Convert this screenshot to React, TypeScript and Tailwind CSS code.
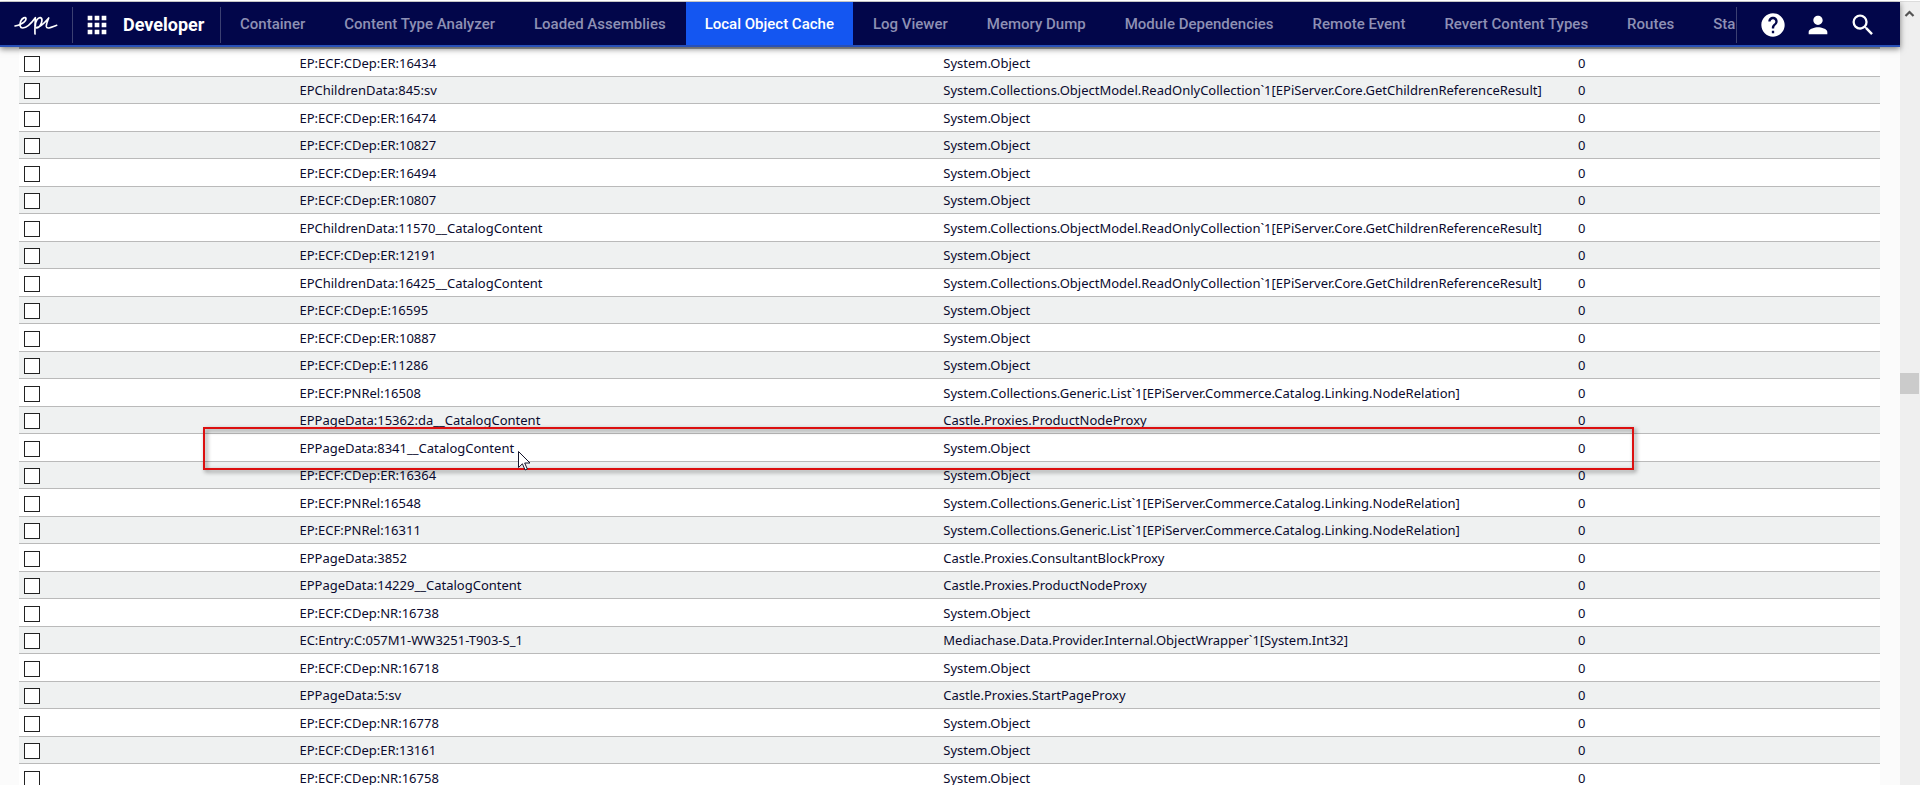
import React from "react";
import clsx from "clsx";
import { MdApps, MdHelp, MdPerson, MdSearch } from "react-icons/md";

type CacheItem = {
  name: string;
  type: string;
  highlighted?: boolean;
};

const childrenResult =
  "System.Collections.ObjectModel.ReadOnlyCollection`1[EPiServer.Core.GetChildrenReferenceResult]";
const nodeRelationList =
  "System.Collections.Generic.List`1[EPiServer.Commerce.Catalog.Linking.NodeRelation]";

const navItems = [
  "Container",
  "Content Type Analyzer",
  "Loaded Assemblies",
  "Local Object Cache",
  "Log Viewer",
  "Memory Dump",
  "Module Dependencies",
  "Remote Event",
  "Revert Content Types",
  "Routes",
  "Sta",
];

const items: CacheItem[] = [
  { name: "EP:ECF:CDep:ER:16434", type: "System.Object" },
  { name: "EPChildrenData:845:sv", type: childrenResult },
  { name: "EP:ECF:CDep:ER:16474", type: "System.Object" },
  { name: "EP:ECF:CDep:ER:10827", type: "System.Object" },
  { name: "EP:ECF:CDep:ER:16494", type: "System.Object" },
  { name: "EP:ECF:CDep:ER:10807", type: "System.Object" },
  { name: "EPChildrenData:11570__CatalogContent", type: childrenResult },
  { name: "EP:ECF:CDep:ER:12191", type: "System.Object" },
  { name: "EPChildrenData:16425__CatalogContent", type: childrenResult },
  { name: "EP:ECF:CDep:E:16595", type: "System.Object" },
  { name: "EP:ECF:CDep:ER:10887", type: "System.Object" },
  { name: "EP:ECF:CDep:E:11286", type: "System.Object" },
  { name: "EP:ECF:PNRel:16508", type: nodeRelationList },
  { name: "EPPageData:15362:da__CatalogContent", type: "Castle.Proxies.ProductNodeProxy" },
  { name: "EPPageData:8341__CatalogContent", type: "System.Object", highlighted: true },
  { name: "EP:ECF:CDep:ER:16364", type: "System.Object" },
  { name: "EP:ECF:PNRel:16548", type: nodeRelationList },
  { name: "EP:ECF:PNRel:16311", type: nodeRelationList },
  { name: "EPPageData:3852", type: "Castle.Proxies.ConsultantBlockProxy" },
  { name: "EPPageData:14229__CatalogContent", type: "Castle.Proxies.ProductNodeProxy" },
  { name: "EP:ECF:CDep:NR:16738", type: "System.Object" },
  {
    name: "EC:Entry:C:057M1-WW3251-T903-S_1",
    type: "Mediachase.Data.Provider.Internal.ObjectWrapper`1[System.Int32]",
  },
  { name: "EP:ECF:CDep:NR:16718", type: "System.Object" },
  { name: "EPPageData:5:sv", type: "Castle.Proxies.StartPageProxy" },
  { name: "EP:ECF:CDep:NR:16778", type: "System.Object" },
  { name: "EP:ECF:CDep:ER:13161", type: "System.Object" },
  { name: "EP:ECF:CDep:NR:16758", type: "System.Object" },
];

const Logo = () => (
  <svg viewBox="44 48 132 60" className="w-11 h-5" fill="none" stroke="white" strokeWidth="5" strokeLinecap="round" strokeLinejoin="round">
    <path d="M47 81C58 80 80 69 80 59C79 52 68 57 64 67C60 78 62 87 70 87C82 86 98 70 108 56C108 70 106 90 107 105" />
    <path d="M108 80C108 66 116 55 123 56C131 58 128 72 122 80C118 86 113 88 110 86C124 86 137 70 148 57C145 66 140 76 141 83C143 92 158 84 172 79" />
  </svg>
);

const Cursor = () => (
  <svg viewBox="0 0 13 20" className="absolute left-[499px] top-[17px] z-10 w-[13px] h-5">
    <path d="M.5 .5V16.5L4.4 12.8L7.1 19L9.3 18L6.7 12H12Z" fill="white" stroke="#15152a" strokeWidth="1" />
  </svg>
);

const Header = () => {
  return (
    <header className="relative z-20 flex h-[45px] shrink-0 items-stretch border-b-2 border-[#2850b8] bg-[#02064a] font-[Roboto,sans-serif] text-white shadow-[0_2px_6px_rgba(0,0,0,0.5)]">
      <a href="#" aria-label="Episerver" className="mt-[5px] mb-0.5 flex w-[73px] shrink-0 items-center border-r border-[#3c4072] pl-[14px]">
        <Logo />
      </a>
      <a href="#" className="mt-[5px] mb-0.5 flex w-[148px] shrink-0 items-center gap-3 border-r border-[#3c4072] pl-[10px] text-lg font-bold">
        <MdApps className="size-7" />
        Developer
      </a>
      <nav className="flex min-w-0 flex-1 gap-px overflow-hidden">
        {navItems.map((label) => (
          <a
            key={label}
            href="#"
            className={clsx(
              "flex shrink-0 items-center px-[19px] pt-0.5 text-[15px] font-medium whitespace-nowrap",
              label === "Local Object Cache" ? "bg-[#1456f1] text-white" : "text-[#8e90b4]"
            )}
          >
            {label}
          </a>
        ))}
      </nav>
      <div className="mt-[5px] mb-0.5 flex w-[164px] shrink-0 items-center gap-[17px] border-l border-[#3c4072] pl-[22px]">
        <button aria-label="Help">
          <MdHelp className="size-7" />
        </button>
        <button aria-label="User">
          <MdPerson className="size-7" />
        </button>
        <button aria-label="Search">
          <MdSearch className="size-7" />
        </button>
      </div>
    </header>
  );
};

const CacheTable = () => {
  return (
    <table className="w-full table-fixed border-separate border-spacing-0 bg-white text-[13px] leading-5 text-[#0a0a2e]">
      <colgroup>
        <col className="w-[14.8%]" />
        <col className="w-[34.6%]" />
        <col className="w-[34.1%]" />
        <col />
      </colgroup>
      <tbody>
        {items.map((item) => (
          <tr
            key={item.name}
            className="relative h-7 even:h-[27px] even:bg-[#eff1f1] *:border-b *:border-[#bababa] *:pt-1 *:pl-[5px] *:align-top even:*:pt-[3px]"
          >
            <td>
              <input
                type="checkbox"
                aria-label={item.name}
                className="mt-[3px] block size-4 appearance-none border border-[#222] bg-white checked:bg-[#1456f1]"
              />
              {item.highlighted && (
                <>
                  <span className="pointer-events-none absolute -top-[7px] right-[13.2%] -bottom-2 left-[9.9%] z-10 border-2 border-[#dc1010] drop-shadow-[2px_2px_2px_rgba(0,0,0,0.5)]"></span>
                  <Cursor />
                </>
              )}
            </td>
            <td>{item.name}</td>
            <td>{item.type}</td>
            <td>0</td>
          </tr>
        ))}
      </tbody>
    </table>
  );
};

const ScrollBar = () => {
  return (
    <div className="flex w-5 shrink-0 flex-col bg-[#efefef]">
      <svg viewBox="0 0 20 20" className="mt-px size-5" fill="none" stroke="#555" strokeWidth="2.2">
        <path d="M5.5 13L9.5 9L13.5 13" />
      </svg>
      <div className="grow-[472]"></div>
      <div className="mr-px h-[21px] bg-[#cbcbcb]"></div>
      <div className="grow-[528]"></div>
    </div>
  );
};

const App = () => {
  return (
    <div className="flex h-screen flex-col overflow-hidden border-t border-white bg-[#fbfbfb] font-['Noto_Sans',sans-serif]">
      <div className="flex min-h-0 flex-1 border-t border-[#dcdcdc]">
        <div className="flex min-w-0 flex-1 flex-col">
          <Header />
          <main className="min-h-0 flex-1 overflow-hidden pr-5 pl-[19px]">
            <div className="border-t-2 border-[#aaa]">
              <CacheTable />
            </div>
          </main>
        </div>
        <ScrollBar />
      </div>
    </div>
  );
};

export default App;
